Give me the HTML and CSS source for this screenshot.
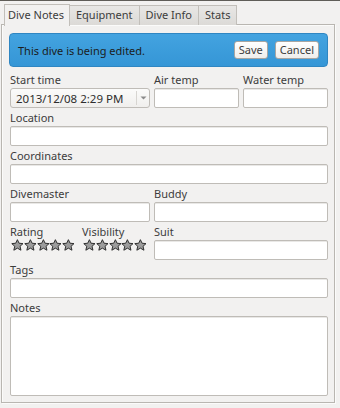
FILE: index.html
```html
<!DOCTYPE html>
<html>
<head>
<meta charset="utf-8">
<link rel="stylesheet" href="styles.css">
</head>
<body>
<div class="topline"></div>
<div class="tabs">
  <div class="tab active">Dive Notes</div>
  <div class="tab">Equipment</div>
  <div class="tab">Dive Info</div>
  <div class="tab">Stats</div>
</div>
<div class="panel">
  <div class="banner">
    <span class="banner-text">This dive is being edited.</span>
    <div class="banner-buttons">
      <button class="btn">Save</button>
      <button class="btn">Cancel</button>
    </div>
  </div>
  <div class="form">
    <div class="field span2">
      <label>Start time</label>
      <div class="combo"><span class="combo-text">2013/12/08 2:29 PM</span><span class="combo-sep"></span><span class="combo-arrow"><svg width="7" height="4" viewBox="0 0 7 4"><path d="M0.5 0.5 L3.5 3.5 L6.5 0.5 Z" fill="#8a8a8a"/></svg></span></div>
    </div>
    <div class="field">
      <label>Air temp</label>
      <div class="input"></div>
    </div>
    <div class="field">
      <label>Water temp</label>
      <div class="input"></div>
    </div>
    <div class="field span4">
      <label>Location</label>
      <div class="input"></div>
    </div>
    <div class="field span4">
      <label>Coordinates</label>
      <div class="input"></div>
    </div>
    <div class="field span2">
      <label>Divemaster</label>
      <div class="input"></div>
    </div>
    <div class="field span2">
      <label>Buddy</label>
      <div class="input"></div>
    </div>
    <div class="field">
      <label>Rating</label>
      <div class="stars">
        <svg class="star" viewBox="0 0 13 12"><path d="M6.5 0.6 L8.2 4.2 L12.2 4.6 L9.2 7.3 L10.1 11.3 L6.5 9.2 L2.9 11.3 L3.8 7.3 L0.8 4.6 L4.8 4.2 Z"/></svg>
        <svg class="star" viewBox="0 0 13 12"><path d="M6.5 0.6 L8.2 4.2 L12.2 4.6 L9.2 7.3 L10.1 11.3 L6.5 9.2 L2.9 11.3 L3.8 7.3 L0.8 4.6 L4.8 4.2 Z"/></svg>
        <svg class="star" viewBox="0 0 13 12"><path d="M6.5 0.6 L8.2 4.2 L12.2 4.6 L9.2 7.3 L10.1 11.3 L6.5 9.2 L2.9 11.3 L3.8 7.3 L0.8 4.6 L4.8 4.2 Z"/></svg>
        <svg class="star" viewBox="0 0 13 12"><path d="M6.5 0.6 L8.2 4.2 L12.2 4.6 L9.2 7.3 L10.1 11.3 L6.5 9.2 L2.9 11.3 L3.8 7.3 L0.8 4.6 L4.8 4.2 Z"/></svg>
        <svg class="star" viewBox="0 0 13 12"><path d="M6.5 0.6 L8.2 4.2 L12.2 4.6 L9.2 7.3 L10.1 11.3 L6.5 9.2 L2.9 11.3 L3.8 7.3 L0.8 4.6 L4.8 4.2 Z"/></svg>
      </div>
    </div>
    <div class="field">
      <label>Visibility</label>
      <div class="stars">
        <svg class="star" viewBox="0 0 13 12"><path d="M6.5 0.6 L8.2 4.2 L12.2 4.6 L9.2 7.3 L10.1 11.3 L6.5 9.2 L2.9 11.3 L3.8 7.3 L0.8 4.6 L4.8 4.2 Z"/></svg>
        <svg class="star" viewBox="0 0 13 12"><path d="M6.5 0.6 L8.2 4.2 L12.2 4.6 L9.2 7.3 L10.1 11.3 L6.5 9.2 L2.9 11.3 L3.8 7.3 L0.8 4.6 L4.8 4.2 Z"/></svg>
        <svg class="star" viewBox="0 0 13 12"><path d="M6.5 0.6 L8.2 4.2 L12.2 4.6 L9.2 7.3 L10.1 11.3 L6.5 9.2 L2.9 11.3 L3.8 7.3 L0.8 4.6 L4.8 4.2 Z"/></svg>
        <svg class="star" viewBox="0 0 13 12"><path d="M6.5 0.6 L8.2 4.2 L12.2 4.6 L9.2 7.3 L10.1 11.3 L6.5 9.2 L2.9 11.3 L3.8 7.3 L0.8 4.6 L4.8 4.2 Z"/></svg>
        <svg class="star" viewBox="0 0 13 12"><path d="M6.5 0.6 L8.2 4.2 L12.2 4.6 L9.2 7.3 L10.1 11.3 L6.5 9.2 L2.9 11.3 L3.8 7.3 L0.8 4.6 L4.8 4.2 Z"/></svg>
      </div>
    </div>
    <div class="field span2">
      <label>Suit</label>
      <div class="input"></div>
    </div>
    <div class="field span4">
      <label>Tags</label>
      <div class="input"></div>
    </div>
    <div class="field span4">
      <label>Notes</label>
      <div class="input notes"></div>
    </div>
  </div>
</div>
</body>
</html>
```
FILE: styles.css
```css
html, body {
  margin: 0;
  padding: 0;
}
body {
  width: 340px;
  height: 408px;
  overflow: hidden;
  background: #f2f1f0;
  font-family: "Noto Sans", "DejaVu Sans", sans-serif;
  font-size: 11px;
  color: #3c3c3c;
}
.topline {
  height: 1px;
  background: #5f5d58;
}
.tabs {
  display: flex;
  padding-left: 4px;
  margin-top: 3px;
  height: 20px;
  position: relative;
  z-index: 1;
}
.tab {
  box-sizing: border-box;
  height: 20px;
  margin-top: 1px;
  padding: 0 6px;
  line-height: 18px;
  font-size: 11px;
  color: #3c3c3c;
  background: linear-gradient(#e8e7e5, #dcdad7);
  border: 1px solid #c2bfba;
  border-bottom: none;
  border-left: none;
}
.tab:first-child {
  border-left: 1px solid #c2bfba;
}
.tab.active {
  margin-top: 0;
  height: 22px;
  background: #f2f1f0;
  border-left: 1px solid #c2bfba;
  border-right: 1px solid #c2bfba;
  padding: 0 5px 0 3px;
  line-height: 20px;
}
.tab.active + .tab {
  border-left: none;
}
.panel {
  box-sizing: border-box;
  margin-left: 1px;
  width: 334px;
  height: 379px;
  border: 1px solid #b9b6b1;
  box-shadow: inset 1px 1px 0 #fbfbfa, 1px 1px 0 #fbfbfa;
  padding: 8px 6px 0 7px;
}
.banner {
  box-sizing: border-box;
  height: 34px;
  border-radius: 4px;
  background: linear-gradient(#43a3e0, #3596d6);
  border: 1px solid #2f86c2;
  display: flex;
  align-items: center;
  justify-content: space-between;
  padding: 0 8px 0 8px;
  color: #1c1c1c;
  font-size: 11px;
}
.banner-buttons {
  display: flex;
  gap: 7px;
}
.btn {
  font-family: inherit;
  font-size: 11px;
  color: #3c3c3c;
  height: 18px;
  padding: 0 4px;
  border: 1px solid #a9a6a2;
  border-radius: 3px;
  background: linear-gradient(#ffffff, #efeeec);
  line-height: 16px;
}
.form {
  display: grid;
  grid-template-columns: 68px 68px 1fr 1fr;
  column-gap: 4px;
  row-gap: 3px;
  padding: 6px 0 0 1px;
}
.field {
  display: flex;
  flex-direction: column;
}
.span2 { grid-column: span 2; }
.span4 { grid-column: span 4; }
label {
  height: 14px;
  line-height: 14px;
  margin-bottom: 1px;
  color: #3c3c3c;
}
.input {
  box-sizing: border-box;
  height: 20px;
  background: #ffffff;
  border: 1px solid #bfbcb7;
  border-radius: 2px;
  box-shadow: inset 0 1px 0 #e9e8e6;
}
.input.notes {
  height: 80px;
}
.combo {
  box-sizing: border-box;
  height: 20px;
  display: flex;
  align-items: center;
  background: linear-gradient(#fbfbfa, #f0efed);
  border: 1px solid #bfbcb7;
  border-radius: 3px;
  color: #2e2e2e;
}
.combo-text {
  flex: 1;
  padding-left: 5px;
  font-size: 11.5px;
}
.combo-sep {
  width: 1px;
  height: 14px;
  background: #d7d5d1;
}
.combo-arrow {
  width: 12px;
  display: flex;
  justify-content: center;
  align-items: center;
}
.stars {
  display: flex;
  height: 12px;
  margin-top: -1px;
  margin-left: 1px;
}
.star {
  width: 12.8px;
  height: 12px;
  flex: none;
}
.star path {
  fill: #9c9c9c;
  stroke: #2e2e2e;
  stroke-width: 1;
  stroke-linejoin: round;
}
```
